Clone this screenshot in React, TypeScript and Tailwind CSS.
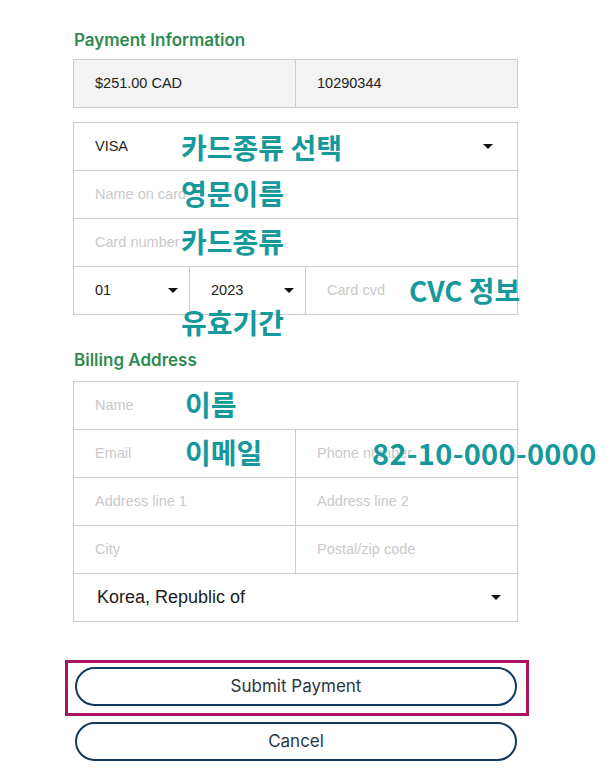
import React from "react";

const BORDER = "border-[#cccccc]";

function Caret({ className = "" }: { className?: string }) {
  return (
    <svg width="10" height="5" viewBox="0 0 10 5" className={className}>
      <path d="M0 0h10L5 5z" fill="#111" />
    </svg>
  );
}

function Cell({
  children,
  className = "",
  placeholder = false,
}: {
  children: React.ReactNode;
  className?: string;
  placeholder?: boolean;
}) {
  return (
    <div
      className={`h-12 flex items-center pl-[21px] border-r border-b ${BORDER} text-[14.5px] ${
        placeholder ? "text-[#c9c9c9]" : "text-[#222]"
      } ${className}`}
    >
      {children}
    </div>
  );
}

function Note({ children, className }: { children: React.ReactNode; className: string }) {
  return (
    <span
      className={`absolute font-bold leading-none text-[#16999a] whitespace-nowrap ${className}`}
      style={{ fontFamily: '"Noto Sans CJK KR", "Noto Sans", sans-serif' }}
    >
      {children}
    </span>
  );
}

export default function App() {
  return (
    <div
      className="relative w-[614px] h-[782px] bg-white overflow-hidden"
      style={{ fontFamily: '"Liberation Sans", Arial, sans-serif' }}
    >
      <div className="ml-[73px] w-[445px] pt-[29px]">
        <h2 className="text-[17px] leading-[22px] font-semibold text-[#2e8b4f] pl-px" style={{ fontFamily: "Inter, sans-serif" }}>
          Payment Information
        </h2>

        {/* amount / order */}
        <div className={`mt-[8px] grid grid-cols-2 border-l border-t ${BORDER} bg-[#f3f3f3]`}>
          <Cell>$251.00 CAD</Cell>
          <Cell>10290344</Cell>
        </div>

        {/* card */}
        <div className={`mt-[14px] border-l border-t ${BORDER}`}>
          <Cell className="justify-between pr-[24px]">
            <span>VISA</span>
            <Caret />
          </Cell>
          <Cell placeholder>Name on card</Cell>
          <Cell placeholder>Card number</Cell>
          <div className="grid grid-cols-[116px_116px_1fr]">
            <Cell className="justify-between pr-[11px]">
              <span>01</span>
              <Caret />
            </Cell>
            <Cell className="justify-between pr-[11px]">
              <span>2023</span>
              <Caret />
            </Cell>
            <Cell placeholder>Card cvd</Cell>
          </div>
        </div>

        <h2 className="mt-[34px] text-[17px] leading-[22px] font-semibold text-[#2e8b4f] pl-px" style={{ fontFamily: "Inter, sans-serif" }}>
          Billing Address
        </h2>

        {/* billing */}
        <div className={`mt-[10px] border-l border-t ${BORDER}`}>
          <Cell placeholder>Name</Cell>
          <div className="grid grid-cols-2">
            <Cell placeholder>Email</Cell>
            <Cell placeholder>Phone number</Cell>
            <Cell placeholder>Address line 1</Cell>
            <Cell placeholder>Address line 2</Cell>
            <Cell placeholder>City</Cell>
            <Cell placeholder>Postal/zip code</Cell>
          </div>
          <Cell className="justify-between pl-[23px] pr-[16px] !text-[18px] !text-[#1c1c1c]">
            <span>Korea, Republic of</span>
            <Caret />
          </Cell>
        </div>

        <div className="mt-[45px] ml-[2px] w-[442px] flex flex-col gap-[16px]">
          <button className="h-[39px] rounded-full border-2 border-[#123a5c] text-[17px] text-[#2b3644]" style={{ fontFamily: "Inter, sans-serif" }}>
            Submit Payment
          </button>
          <button className="h-[39px] rounded-full border-2 border-[#123a5c] text-[17px] text-[#2b3644]" style={{ fontFamily: "Inter, sans-serif" }}>
            Cancel
          </button>
        </div>
      </div>

      {/* annotation frame */}
      <div className="absolute left-[65px] top-[660px] w-[464px] h-[56px] border-[3px] border-[#a8155c]" />

      {/* annotations */}
      <Note className="left-[181px] top-[133px] text-[28px]">카드종류 선택</Note>
      <Note className="left-[181px] top-[179px] text-[28px]">영문이름</Note>
      <Note className="left-[181px] top-[227px] text-[28px]">카드종류</Note>
      <Note className="left-[409px] top-[276px] text-[28px]">CVC 정보</Note>
      <Note className="left-[181px] top-[308px] text-[28px]">유효기간</Note>
      <Note className="left-[185px] top-[390px] text-[28px]">이름</Note>
      <Note className="left-[185px] top-[438px] text-[28px]">이메일</Note>
      <Note className="left-[372px] top-[438px] text-[29px] tracking-[0.3px]">82-10-000-0000</Note>
    </div>
  );
}
